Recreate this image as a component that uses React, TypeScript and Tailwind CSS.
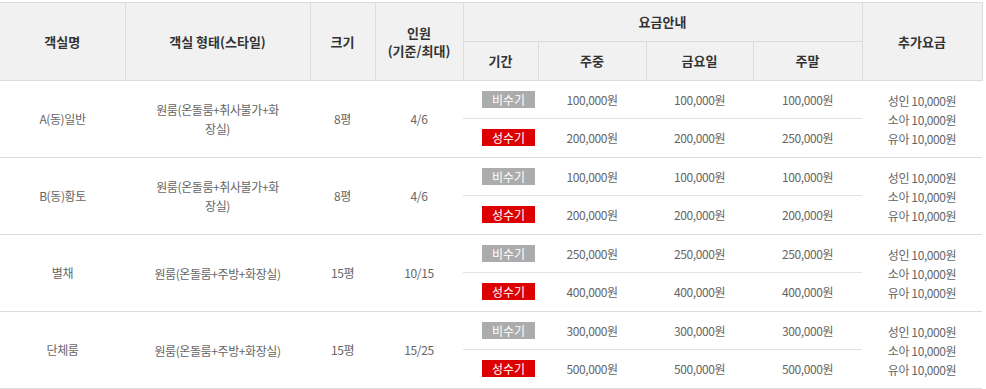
const rooms = [
  {
    name: "A(동)일반",
    type: ["원룸(온돌룸+취사불가+화", "장실)"],
    size: "8평",
    people: "4/6",
    off: ["100,000원", "100,000원", "100,000원"],
    peak: ["200,000원", "200,000원", "250,000원"],
  },
  {
    name: "B(동)황토",
    type: ["원룸(온돌룸+취사불가+화", "장실)"],
    size: "8평",
    people: "4/6",
    off: ["100,000원", "100,000원", "100,000원"],
    peak: ["200,000원", "200,000원", "200,000원"],
  },
  {
    name: "별채",
    type: ["원룸(온돌룸+주방+화장실)"],
    size: "15평",
    people: "10/15",
    off: ["250,000원", "250,000원", "250,000원"],
    peak: ["400,000원", "400,000원", "400,000원"],
  },
  {
    name: "단체룸",
    type: ["원룸(온돌룸+주방+화장실)"],
    size: "15평",
    people: "15/25",
    off: ["300,000원", "300,000원", "300,000원"],
    peak: ["500,000원", "500,000원", "500,000원"],
  },
];

const th = "border border-[#dcdcdc] bg-[#f1f1f1] text-[13px] font-bold text-[#333] text-center align-middle p-0";
const td = "text-center align-middle p-0 text-[12px] text-[#666] tracking-[-0.4px]";
const inner = " border-t border-[#e2e2e2]";

export default function App() {
  return (
    <div
      className="bg-white w-[986px] h-[389px] pt-[2px]"
      style={{ fontFamily: '"Noto Sans CJK KR", "Noto Sans", sans-serif' }}
    >
      <table className="w-[982px] border-collapse table-fixed">
        <colgroup>
          <col className="w-[125px]" />
          <col className="w-[185px]" />
          <col className="w-[65px]" />
          <col className="w-[88px]" />
          <col className="w-[75px]" />
          <col className="w-[108px]" />
          <col className="w-[107px]" />
          <col className="w-[109px]" />
          <col className="w-[120px]" />
        </colgroup>
        <thead>
          <tr className="h-[39px]">
            <th rowSpan={2} className={th + " border-l-0"}>객실명</th>
            <th rowSpan={2} className={th}>객실 형태(스타일)</th>
            <th rowSpan={2} className={th}>크기</th>
            <th rowSpan={2} className={th + " leading-[18px]"}>
              <div>인원</div>
              <div>(기준/최대)</div>
            </th>
            <th colSpan={4} className={th}>요금안내</th>
            <th rowSpan={2} className={th}>추가요금</th>
          </tr>
          <tr className="h-[39px]">
            <th className={th}>기간</th>
            <th className={th}>주중</th>
            <th className={th}>금요일</th>
            <th className={th}>주말</th>
          </tr>
        </thead>
        <tbody>
          {rooms.map((r) => (
            <>
              <tr key={r.name + "a"} className="h-[38px] border-t border-[#dcdcdc]">
                <td rowSpan={2} className={td}>{r.name}</td>
                <td rowSpan={2} className={td + " leading-[19px]"}>
                  {r.type.map((t) => (
                    <div key={t}>{t}</div>
                  ))}
                </td>
                <td rowSpan={2} className={td}>{r.size}</td>
                <td rowSpan={2} className={td}>{r.people}</td>
                <td className={td + " pl-4"}>
                  <span className="inline-block w-[53px] h-[17px] leading-[17px] bg-[#acacac] text-white text-[12px] tracking-normal">
                    비수기
                  </span>
                </td>
                {r.off.map((p, i) => (
                  <td key={i} className={td}>{p}</td>
                ))}
                <td rowSpan={2} className={td + " leading-[19px]"}>
                  <div>성인 10,000원</div>
                  <div>소아 10,000원</div>
                  <div>유아 10,000원</div>
                </td>
              </tr>
              <tr key={r.name + "b"} className="h-[39px]">
                <td className={td + inner + " pl-4"}>
                  <span className="inline-block w-[53px] h-[17px] leading-[17px] bg-[#dd0000] text-white text-[12px] tracking-normal">
                    성수기
                  </span>
                </td>
                {r.peak.map((p, i) => (
                  <td key={i} className={td + inner}>{p}</td>
                ))}
              </tr>
            </>
          ))}
          <tr className="h-0 border-t border-[#dcdcdc]">
            <td colSpan={9} className="p-0" />
          </tr>
        </tbody>
      </table>
    </div>
  );
}
